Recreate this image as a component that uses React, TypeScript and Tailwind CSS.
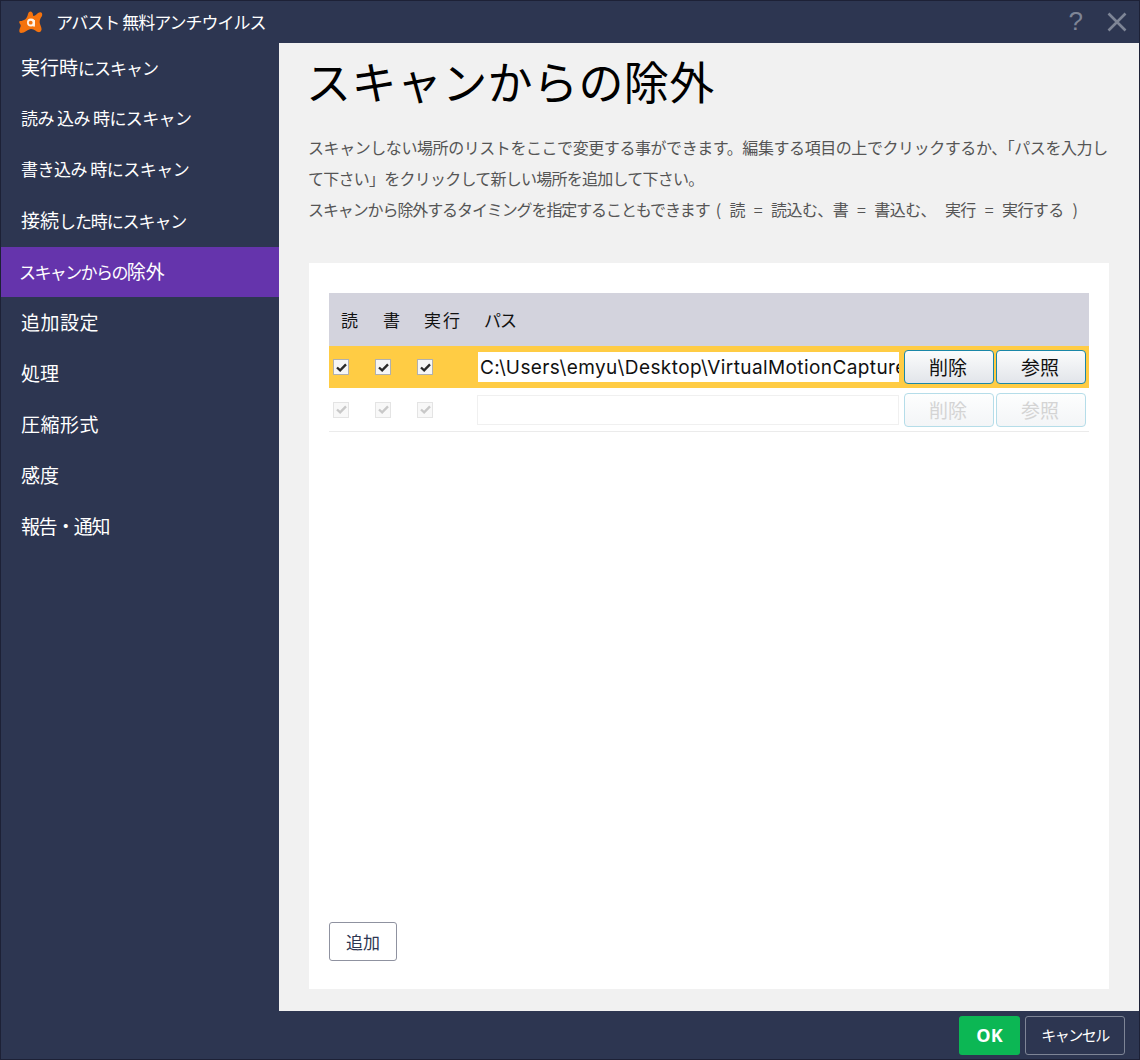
import React from 'react';

const jp = "font-['Noto_Sans_CJK_JP','Noto_Sans',sans-serif]";

const Kanji: React.FC<{ children: React.ReactNode }> = ({ children }) => (
  <span className="text-[19px] tracking-normal">{children}</span>
);

const menuItems: { key: string; label: React.ReactNode; cls: string; active?: boolean }[] = [
  { key: 'run', label: <><Kanji>実行時</Kanji>にスキャン</>, cls: 'tracking-[-1px]' },
  { key: 'read', label: '読み 込み 時にスキャン', cls: 'tracking-[-0.6px]' },
  { key: 'write', label: '書き込み 時にスキャン', cls: 'tracking-[-0.5px]' },
  { key: 'connect', label: <><Kanji>接続</Kanji>した時にスキャン</>, cls: 'tracking-[-1.1px]' },
  { key: 'exclude', label: <>スキャンからの<Kanji>除外</Kanji></>, cls: '-ml-[2px] tracking-[-1.6px]', active: true },
  { key: 'extra', label: '追加設定', cls: 'text-[19px] tracking-[0.5px]' },
  { key: 'action', label: '処理', cls: 'text-[19px]' },
  { key: 'archive', label: '圧縮形式', cls: 'text-[19px] tracking-[0.5px]' },
  { key: 'sense', label: '感度', cls: 'text-[19px]' },
  { key: 'report', label: '報告・通知', cls: 'text-[19px] tracking-[-1.4px]' },
];

const Check: React.FC<{ disabled?: boolean }> = ({ disabled }) => (
  <div
    className={`flex h-[16px] w-[16px] items-center justify-center border ${
      disabled ? 'border-[#e4e4e4] bg-[#f8f8f8]' : 'border-[#b0b0b0] bg-[#f6f6f6]'
    }`}
  >
    <svg viewBox="0 0 12 10" className="h-[9px] w-[11px]">
      <path
        d="M1 5 L4.5 8.2 L11 1.6"
        fill="none"
        stroke={disabled ? '#c8c8c8' : '#2a2a2a'}
        strokeWidth="2.6"
      />
    </svg>
  </div>
);

const RowButton: React.FC<{ label: string; disabled?: boolean }> = ({ label, disabled }) => (
  <button
    className={`h-[34px] w-[90px] rounded-[4px] border bg-gradient-to-b pr-[2px] text-[19px] ${
      disabled
        ? 'border-[#b5dde9] from-[#fdfefe] to-[#f3f5f7] text-[#d4d4d4]'
        : 'border-[#1a87a8] from-[#fbfcfc] to-[#e2e5ea] text-[#111111]'
    }`}
  >
    {label}
  </button>
);

const App: React.FC = () => {
  return (
    <div className={`${jp} flex h-[1060px] w-[1140px] flex-col overflow-hidden border border-[#1d2136] bg-[#2d3651]`}>
      {/* title bar */}
      <div className="flex h-[42px] items-center pl-[17px] pr-[12px]">
        <svg viewBox="0 0 26 26" className="h-[26px] w-[26px]">
          <path
            d="M2 12 C6 12 9 10 10 5 C11 1 15 2 15 6 C15 8 17 7 20 4 C23 2 25 4 24 7 C22 10 21 12 22 15 C23 18 25 21 22 23 C19 24 17 20 13 20 C10 20 7 24 3 24 C1 24 1 21 2 19 C3 17 3 16 2 15 C1 14 1 12 2 12 Z"
            fill="#f5730e"
          />
          <circle cx="13" cy="13.5" r="4" fill="#fff3e8" />
          <circle cx="12.7" cy="13.7" r="1.9" fill="#f5730e" />
          <rect x="15.2" y="11" width="1.7" height="6.6" fill="#fff3e8" />
        </svg>
        <span className="ml-[12px] text-[17px] tracking-[-1px] text-white">アバスト 無料アンチウイルス</span>
        <span className="ml-auto -mt-[1px] font-['Liberation_Sans',sans-serif] text-[26px] text-[#7e8596]">?</span>
        <svg viewBox="0 0 20 20" className="ml-[24px] h-[20px] w-[20px]">
          <path d="M1.5 1.5 L18.5 18.5 M18.5 1.5 L1.5 18.5" stroke="#7e8596" strokeWidth="2.6" fill="none" />
        </svg>
      </div>

      <div className="flex h-[968px]">
        {/* sidebar */}
        <nav className="flex w-[278px] flex-col gap-[1px]">
          {menuItems.map((item) => (
            <div
              key={item.key}
              className={`flex h-[50px] items-center pb-[2px] pl-[20px] text-white ${item.active ? 'bg-[#6534ac]' : ''}`}
            >
              <span className={`text-[17px] ${item.cls}`}>{item.label}</span>
            </div>
          ))}
        </nav>

        {/* content */}
        <main className="flex flex-1 flex-col bg-[#f1f1f1] px-[30px] pb-[22px]">
          <h1 className="mt-[6px] -ml-[3px] text-[45px] leading-[64px] tracking-[0.4px] text-black">スキャンからの除外</h1>
          <p className="mt-[19px] -ml-[1px] whitespace-nowrap text-[16px] leading-[31px] text-[#555555]">
            <span className="tracking-[-0.43px]">スキャンしない場所のリストをここで変更する事ができます。編集する項目の上でクリックするか、「パスを入力し</span>
            <br />
            <span className="tracking-[-0.75px]">て下さい」をクリックして新しい場所を追加して下さい。</span>
            <br />
            <span className="tracking-[-1.1px]">スキャンから除外するタイミングを指定することもできます</span>
            <span className="ml-[6px] tracking-[-0.6px] [word-spacing:6px]">( 読 = 読込む、書 = 書込む、 実行 = 実行する )</span>
          </p>

          <section className="mt-[38px] flex flex-1 flex-col bg-white px-[20px] pb-[28px] pt-[30px]">
            {/* header row */}
            <div className="flex h-[53px] items-center bg-[#d3d3dd] pt-[1px] text-[17px] text-[#111111]">
              <span className="ml-[12px] w-[42px]">読</span>
              <span className="w-[41px]">書</span>
              <span className="w-[60px] tracking-[2px]">実行</span>
              <span className="tracking-[-1px]">パス</span>
            </div>

            {/* selected row */}
            <div className="flex h-[42px] items-center bg-[#ffcc44]">
              <div className="flex w-[149px] gap-[26px] pl-[4px]">
                <Check />
                <Check />
                <Check />
              </div>
              <div className="flex h-[30px] w-[421px] items-center overflow-hidden whitespace-nowrap bg-white pl-[2px] pt-[2px] font-['Inter',sans-serif] text-[19px] tracking-[0.4px] text-[#111111]">
                C:\Users\emyu\Desktop\VirtualMotionCapture
              </div>
              <div className="ml-[5px] flex gap-[2px]">
                <RowButton label="削除" />
                <RowButton label="参照" />
              </div>
            </div>

            {/* empty row */}
            <div className="mt-[1px] flex h-[43px] items-center border-b border-[#ebebeb]">
              <div className="-mt-[1px] flex w-[148px] gap-[26px] pl-[4px]">
                <Check disabled />
                <Check disabled />
                <Check disabled />
              </div>
              <div className="h-[30px] w-[422px] border border-[#f0f0f0] bg-white" />
              <div className="ml-[5px] flex gap-[2px]">
                <RowButton label="削除" disabled />
                <RowButton label="参照" disabled />
              </div>
            </div>

            <button className="mt-auto h-[39px] w-[68px] rounded-[3px] border border-[#8f92a0] bg-white text-[17px] text-[#2d3651]">
              追加
            </button>
          </section>
        </main>
      </div>

      {/* footer */}
      <div className="flex flex-1 items-center justify-end gap-[5px] pr-[14px]">
        <button className="h-[39px] w-[61px] rounded-[3px] bg-[#0cb754] font-['Open_Sans',sans-serif] text-[18px] font-bold text-white">
          OK
        </button>
        <button className="h-[39px] w-[100px] rounded-[3px] border border-[#7e8596] text-[15px] tracking-[-1.5px] text-white">
          キャンセル
        </button>
      </div>
    </div>
  );
};

export default App;
